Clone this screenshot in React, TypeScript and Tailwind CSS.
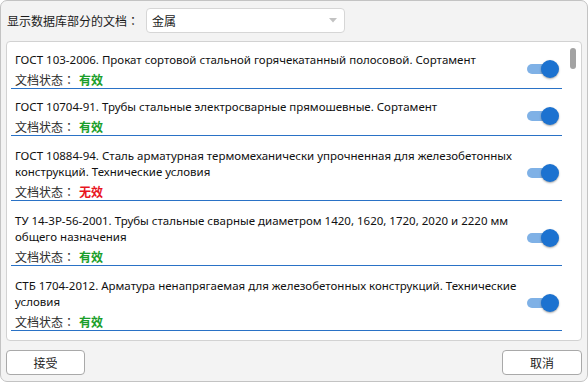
import { useState } from "react";

type Doc = {
  id: string;
  lines: string[];
  valid: boolean;
  enabled: boolean;
};

const DOCS: Doc[] = [
  {
    id: "gost-103",
    lines: ["ГОСТ 103-2006. Прокат сортовой стальной горячекатанный полосовой. Сортамент"],
    valid: true,
    enabled: true,
  },
  {
    id: "gost-10704",
    lines: ["ГОСТ 10704-91. Трубы стальные электросварные прямошевные. Сортамент"],
    valid: true,
    enabled: true,
  },
  {
    id: "gost-10884",
    lines: [
      "ГОСТ 10884-94. Сталь арматурная термомеханически упрочненная для железобетонных",
      "конструкций. Технические условия",
    ],
    valid: false,
    enabled: true,
  },
  {
    id: "tu-14",
    lines: [
      "ТУ 14-3Р-56-2001. Трубы стальные сварные диаметром 1420, 1620, 1720, 2020 и 2220 мм",
      "общего назначения",
    ],
    valid: true,
    enabled: true,
  },
  {
    id: "stb-1704",
    lines: [
      "СТБ 1704-2012. Арматура ненапрягаемая для железобетонных конструкций. Технические",
      "условия",
    ],
    valid: true,
    enabled: true,
  },
];

const UI_FONT = "font-['Noto_Sans','Noto_Sans_CJK_SC',sans-serif]";
const CJK_FONT = "font-['Noto_Sans_CJK_SC',sans-serif]";
// centred full-width colon, as in the reference
const COLON_FONT = "font-['Noto_Sans_CJK_JP',sans-serif]";

function Toggle({ on, onChange }: { on: boolean; onChange: () => void }) {
  return (
    <button
      type="button"
      role="switch"
      aria-checked={on}
      onClick={onChange}
      className="relative flex h-[18px] w-[32px] shrink-0 items-center"
    >
      <span
        className={`h-[10px] w-[28px] rounded-full ${on ? "bg-[#7fb1e6]" : "bg-[#c4c4c4]"}`}
      />
      <span
        className={`absolute top-0 h-[18px] w-[18px] rounded-full shadow-[0_1px_2px_rgba(0,0,0,0.35)] ${
          on ? "left-[14px] bg-[#1c72d0]" : "left-0 bg-[#f5f5f5]"
        }`}
      />
    </button>
  );
}

function DocRow({ doc, onToggle }: { doc: Doc; onToggle: () => void }) {
  const twoLines = doc.lines.length > 1;
  return (
    <div
      className={`flex border-b border-[#2a72c6] pl-[4px] pr-[3px] ${
        twoLines ? "pt-[12px]" : "pt-[10px]"
      }`}
    >
      <div className="min-w-0 flex-1">
        {doc.lines.map((line) => (
          <div key={line} className="whitespace-nowrap text-[11.5px] leading-[16px] text-[#111]">
            {line}
          </div>
        ))}
        <div className={`mt-[4px] flex items-center text-[12px] leading-[16px] text-[#2b2b2b] ${CJK_FONT}`}>
          <span>文档状态</span>
          <span className={COLON_FONT}>：</span>
          <span
            className={`ml-[4px] font-bold ${doc.valid ? "text-[#1a9e2a]" : "text-[#e8151f]"}`}
          >
            {doc.valid ? "有效" : "无效"}
          </span>
        </div>
      </div>
      <div className={`self-center ${twoLines ? "-mt-[3px]" : "mt-[-2px]"}`}>
        <Toggle on={doc.enabled} onChange={onToggle} />
      </div>
    </div>
  );
}

export default function App() {
  const [docs, setDocs] = useState(DOCS);

  const toggle = (id: string) =>
    setDocs((prev) => prev.map((d) => (d.id === id ? { ...d, enabled: !d.enabled } : d)));

  return (
    <div className={`h-[382px] w-[588px] bg-white ${UI_FONT}`}>
      <div className="flex h-[382px] w-[588px] flex-col rounded-[7px] border border-[#c3c3c3] bg-[#f3f3f3] px-[5px]">
        <div className="mt-[7px] flex items-center">
          <span className={`flex w-[140px] pl-[1px] text-[12px] text-[#1b1b1b] ${CJK_FONT}`}>
            显示数据库部分的文档<span className={COLON_FONT}>：</span>
          </span>
          <div className="flex h-[25px] w-[199px] items-center justify-between rounded-[4px] border border-[#d6d6d6] bg-white pl-[5px] pr-[7px]">
            <span className={`text-[12px] text-[#1b1b1b] ${CJK_FONT}`}>金属</span>
            <svg width="8" height="5" viewBox="0 0 8 5">
              <path d="M0 0 L8 0 L4 4.5 Z" fill="#c2c2c2" />
            </svg>
          </div>
        </div>

        <div className="mt-[8px] flex h-[300px] rounded-[4px] border border-[#d2d2d2] bg-white">
          <div className="ml-[4px] w-[551px]">
            {docs.map((doc) => (
              <DocRow key={doc.id} doc={doc} onToggle={() => toggle(doc.id)} />
            ))}
          </div>
          <div className="ml-[8px] pt-[6px]">
            <div className="h-[21px] w-[6px] rounded-full bg-[#a3a3a3]" />
          </div>
        </div>

        <div className="mt-[9px] flex justify-between">
          <button
            type="button"
            className={`h-[25px] w-[79px] rounded-[4px] border border-[#a9a9a9] bg-white text-[12px] text-[#1b1b1b] ${CJK_FONT}`}
          >
            接受
          </button>
          <button
            type="button"
            className={`h-[25px] w-[80px] rounded-[4px] border border-[#a9a9a9] bg-white text-[12px] text-[#1b1b1b] ${CJK_FONT}`}
          >
            取消
          </button>
        </div>
      </div>
    </div>
  );
}
